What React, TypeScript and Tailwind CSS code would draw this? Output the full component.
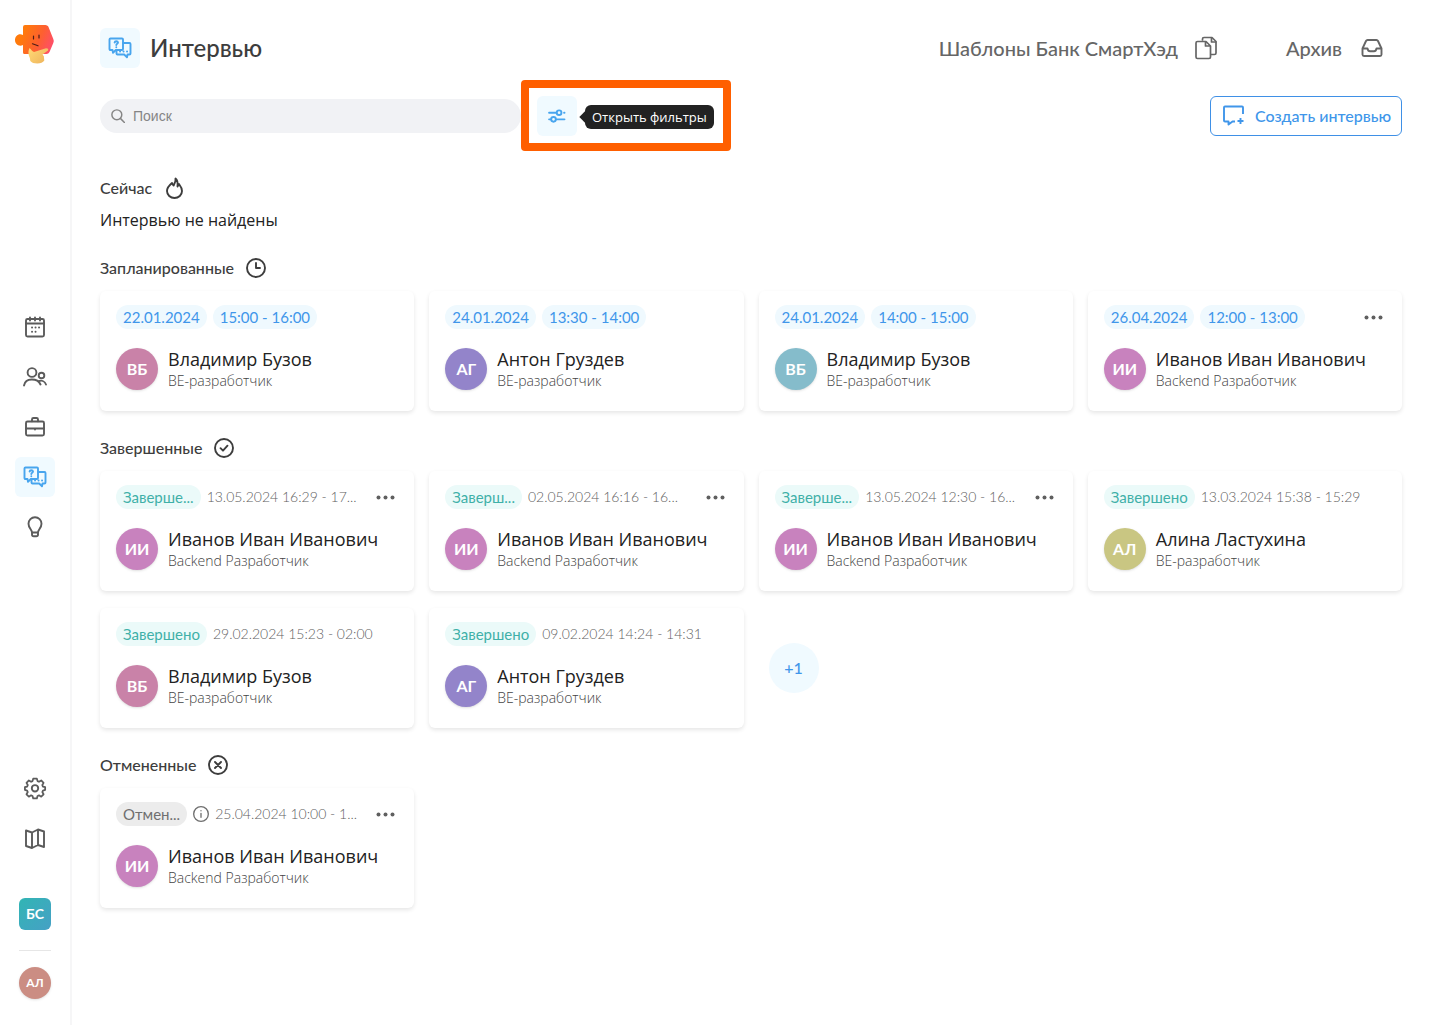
import React, { useState } from 'react';

type Kind = 'planned' | 'done' | 'canceled';

interface Interview {
  id: number;
  kind: Kind;
  label: string;
  time: string;
  name: string;
  role: string;
  initials: string;
  avatar: string;
  menu?: boolean;
}

const PINK = 'bg-[#c982a8]';
const VIOLET = 'bg-[#9384ca]';
const TEAL = 'bg-[#85bccb]';
const MAGENTA = 'bg-[#c882be]';
const OLIVE = 'bg-[#c9c682]';

const planned: Interview[] = [
  { id: 1, kind: 'planned', label: '22.01.2024', time: '15:00 - 16:00', name: 'Владимир Бузов', role: 'BE-разработчик', initials: 'ВБ', avatar: PINK },
  { id: 2, kind: 'planned', label: '24.01.2024', time: '13:30 - 14:00', name: 'Антон Груздев', role: 'BE-разработчик', initials: 'АГ', avatar: VIOLET },
  { id: 3, kind: 'planned', label: '24.01.2024', time: '14:00 - 15:00', name: 'Владимир Бузов', role: 'BE-разработчик', initials: 'ВБ', avatar: TEAL },
  { id: 4, kind: 'planned', label: '26.04.2024', time: '12:00 - 13:00', name: 'Иванов Иван Иванович', role: 'Backend Разработчик', initials: 'ИИ', avatar: MAGENTA, menu: true },
];

const done: Interview[] = [
  { id: 5, kind: 'done', label: 'Заверше...', time: '13.05.2024 16:29 - 17...', name: 'Иванов Иван Иванович', role: 'Backend Разработчик', initials: 'ИИ', avatar: MAGENTA, menu: true },
  { id: 6, kind: 'done', label: 'Заверш...', time: '02.05.2024 16:16 - 16...', name: 'Иванов Иван Иванович', role: 'Backend Разработчик', initials: 'ИИ', avatar: MAGENTA, menu: true },
  { id: 7, kind: 'done', label: 'Заверше...', time: '13.05.2024 12:30 - 16...', name: 'Иванов Иван Иванович', role: 'Backend Разработчик', initials: 'ИИ', avatar: MAGENTA, menu: true },
  { id: 8, kind: 'done', label: 'Завершено', time: '13.03.2024 15:38 - 15:29', name: 'Алина Ластухина', role: 'BE-разработчик', initials: 'АЛ', avatar: OLIVE },
  { id: 9, kind: 'done', label: 'Завершено', time: '29.02.2024 15:23 - 02:00', name: 'Владимир Бузов', role: 'BE-разработчик', initials: 'ВБ', avatar: PINK },
  { id: 10, kind: 'done', label: 'Завершено', time: '09.02.2024 14:24 - 14:31', name: 'Антон Груздев', role: 'BE-разработчик', initials: 'АГ', avatar: VIOLET },
];

const canceled: Interview[] = [
  { id: 11, kind: 'canceled', label: 'Отмен...', time: '25.04.2024 10:00 - 1...', name: 'Иванов Иван Иванович', role: 'Backend Разработчик', initials: 'ИИ', avatar: MAGENTA, menu: true },
];

const pillStyles: Record<Kind, string> = {
  planned: 'bg-[#eff9fe] text-[#4096ea]',
  done: 'bg-[#ebfaf9] text-[#3fb0a8]',
  canceled: 'bg-[#ececec] text-[#6f6f6f]',
};

const Icon: React.FC<{ children: React.ReactNode; className?: string; width?: number }> = ({ children, className = 'size-6', width = 1.9 }) => (
  <svg viewBox="0 0 24 24" fill="none" stroke="currentColor" strokeWidth={width} strokeLinecap="round" strokeLinejoin="round" className={`shrink-0 ${className}`} aria-hidden="true">
    {children}
  </svg>
);

const Logo = () => (
  <svg viewBox="0 0 40 40" className="size-10" aria-hidden="true">
    <defs>
      <linearGradient id="logo-body" x1="4" y1="8" x2="40" y2="24" gradientUnits="userSpaceOnUse">
        <stop offset="0.1" stopColor="#ff7a0c" />
        <stop offset="0.55" stopColor="#fd6030" />
        <stop offset="1" stopColor="#ff4a76" />
      </linearGradient>
      <linearGradient id="logo-hand" x1="14" y1="26" x2="30" y2="40" gradientUnits="userSpaceOnUse">
        <stop stopColor="#ffd773" />
        <stop offset="1" stopColor="#eeb45d" />
      </linearGradient>
    </defs>
    <path fill="url(#logo-body)" d="M10 1h20.500q1.800 0 2.800 1.500l5 12.500q1 2 0 4l-3.800 9q-1 2-3 2H9.500q-1.500 0-1.500-1.500V21c-4 2-8-.8-8-5s4-7.500 8-5V3q0-2 2-2z" />
    <path fill="url(#logo-hand)" d="M14.500 24c1.500 1 2.500 3.500 4.500 4l12-3.800q3 0 2 2.200l-5.500 4q2 1.600 1.500 3.600l.3 2.500q-2 3-7 3t-7-2.500q0-3-1.300-5c-.8-2.500-.8-5.500.5-8z" />
    <path fill="none" stroke="#4e1d18" strokeWidth="1.200" strokeLinecap="round" d="M17.500 19.800l5.500 2M18.500 12v3M24 11v3" />
  </svg>
);

const InterviewIcon = ({ className }: { className?: string }) => (
  <Icon className={className}>
    <path d="M2.500 2.500h11.500q1 0 1 1v9.500q0 1-1 1H7.800L5 16.800 4.500 14h-2q-1 0-1-1V3.500q0-1 1-1z" />
    <path d="M15.200 7h6.300q1 0 1 1v9.500q0 1-1 1h-2l-.5 2.800-2.800-2.800H9.500q-1 0-1-1V14" />
    <path d="M6.600 6.500q.2-1.300 1.700-1.300t1.700 1.300c0 1.200-1.700 1.200-1.700 2.600M8.300 11.200v.1" />
    <path d="M12 15.500h.1M15.500 15.500h.1M19 15.500h.1" />
  </Icon>
);

const navItems = [
  {
    title: 'Календарь',
    icon: (
      <Icon>
        <rect x="3" y="4" width="18" height="17.500" rx="1.500" />
        <path d="M3 8.500h18M7 2.500v3M12 2.500v3M17 2.500v3" />
        <path d="M12.500 12.500h.1M16 12.500h.1M9 12.500h.1M9 16.800h.1M12.500 16.800h.1" />
      </Icon>
    ),
  },
  {
    title: 'Кандидаты',
    icon: (
      <Icon>
        <circle cx="9" cy="7.500" r="4.400" />
        <path d="M1 20.500c1.500-8 13.500-7.500 16.500-1" />
        <circle cx="18.500" cy="10.500" r="2.800" />
        <path d="M15.800 16.200c3-1.200 6 .3 7.200 3.300" />
      </Icon>
    ),
  },
  {
    title: 'Вакансии',
    icon: (
      <Icon>
        <rect x="3" y="6.500" width="18" height="14" rx="1.500" />
        <path d="M9 6.200V4.500q0-1.500 1.500-1.500h3q1.500 0 1.500 1.500v1.700M3 13.500h18M12 13.500v1" />
      </Icon>
    ),
  },
  { title: 'Интервью', icon: <InterviewIcon />, active: true },
  {
    title: 'Подсказки',
    icon: (
      <Icon>
        <path d="M9 17.500c0-3-3.500-4.500-3.500-8.800a6.500 6.500 0 0 1 13 0c0 4.300-3.500 5.800-3.500 8.800zM9 17.500v2q0 1.800 1.800 1.800h2.400q1.800 0 1.800-1.800v-2" />
      </Icon>
    ),
  },
];

const Sidebar = () => (
  <aside className="flex w-[72px] shrink-0 flex-col items-center border-r-2 border-[#f6f6f7] pt-6 pb-[26px] text-[#5b5b5b]">
    <a href="#" aria-label="Главная" className="mb-[22px]">
      <Logo />
    </a>
    <nav className="flex flex-1 flex-col items-center justify-center gap-[10px]">
      {navItems.map(item => (
        <a key={item.title} href="#" aria-label={item.title} className={`flex size-10 items-center justify-center rounded-md ${item.active ? 'bg-[#f0faff] text-[#48a5ee]' : ''}`}>
          {item.icon}
        </a>
      ))}
    </nav>
    <div className="flex flex-col items-center gap-[10px]">
      <a href="#" aria-label="Настройки" className="flex size-10 items-center justify-center">
        <Icon>
          <path d="M10 2.200h4l.7 2.700 1.600.7 2.400-1.400 2.600 2.600-1.400 2.400.7 1.600 2.400.7v3l-2.400.7-.7 1.600 1.400 2.400-2.600 2.600-2.400-1.400-1.600.7-.7 2.700h-4l-.7-2.700-1.600-.7-2.400 1.400-2.600-2.600 1.400-2.400-.7-1.600-2.400-.7v-3l2.400-.7.7-1.600-1.400-2.400 2.600-2.600 2.400 1.400 1.600-.7z" transform="translate(1 .6) scale(.92)" />
          <circle cx="12" cy="12.300" r="3.200" />
        </Icon>
      </a>
      <a href="#" aria-label="База знаний" className="flex size-10 items-center justify-center">
        <Icon>
          <path d="M3 4.500l6 2 6-3 6 2v15.500l-6-2-6 3-6-2zM9 6.500V22M15 3.500V19" />
        </Icon>
      </a>
    </div>
    <button className="mt-10 flex size-8 items-center justify-center rounded-md bg-linear-to-br from-[#30b5b4] to-[#45a0c5] font-['Lato','Open_Sans',sans-serif] text-sm font-bold text-white">БС</button>
    <hr className="mt-5 mb-4 w-8 border-[#e6e6e6]" />
    <button className="flex size-8 items-center justify-center rounded-full bg-[#cb8d83] font-['Lato','Open_Sans',sans-serif] text-xs font-bold text-white shadow-sm">АЛ</button>
  </aside>
);

const SectionTitle: React.FC<{ title: string; children: React.ReactNode }> = ({ title, children }) => (
  <h2 className="flex h-6 items-center gap-[10px] font-['Lato','Open_Sans',sans-serif] text-base font-medium text-[#3d3d3d]">
    {title}
    {children}
  </h2>
);

const InterviewCard = ({ item }: { item: Interview }) => (
  <article className="h-[120px] min-w-0 rounded-md bg-white px-4 pt-[14px] shadow-[0_2px_4px_rgba(0,0,0,0.1)]">
    <div className="flex h-6 items-center gap-[6px] font-['Lato','Open_Sans',sans-serif] text-[15px] whitespace-nowrap">
      <span className={`rounded-full px-[7px] leading-6 ${pillStyles[item.kind]}`}>{item.label}</span>
      {item.kind === 'planned' ? (
        <span className={`rounded-full px-[7px] leading-6 ${pillStyles.planned}`}>{item.time}</span>
      ) : (
        <>
          {item.kind === 'canceled' && (
            <Icon className="size-4 text-[#6f6f6f]" width={2}>
              <circle cx="12" cy="12" r="11" />
              <path d="M12 11v6M12 7v.1" />
            </Icon>
          )}
          <span className="text-sm font-light text-[#5f5f5f]">{item.time}</span>
        </>
      )}
      {item.menu && (
        <button aria-label="Меню" className="ml-auto text-[#5f5f5f]">
          <svg viewBox="0 0 24 24" className="size-6" fill="currentColor" aria-hidden="true">
            <circle cx="4.500" cy="12.500" r="2" />
            <circle cx="11.500" cy="12.500" r="2" />
            <circle cx="18.500" cy="12.500" r="2" />
          </svg>
        </button>
      )}
    </div>
    <div className="mt-[18px] flex items-center gap-[10px]">
      <div className={`flex size-[42px] shrink-0 items-center justify-center rounded-full font-['Lato','Open_Sans',sans-serif] text-base font-bold text-white shadow-sm ${item.avatar}`}>{item.initials}</div>
      <div className="min-w-0">
        <p className="text-lg leading-6">{item.name}</p>
        <p className="text-sm leading-5 font-light text-[#444]">{item.role}</p>
      </div>
    </div>
  </article>
);

const cardGrid = 'mt-[11px] grid grid-cols-4 gap-x-[15px] gap-y-[17px]';

const App: React.FC = () => {
  const [query, setQuery] = useState('');

  return (
    <div className="flex min-h-screen bg-white font-['Open_Sans','Noto_Sans',sans-serif] text-[#222]">
      <Sidebar />
      <main className="min-w-0 flex-1 pt-7 pr-[38px] pl-7">
        <header className="flex h-10 items-center font-['Lato','Open_Sans',sans-serif]">
          <div className="flex size-10 items-center justify-center rounded-md bg-[#f0faff] text-[#48a5ee]">
            <InterviewIcon />
          </div>
          <h1 className="ml-[10px] text-2xl font-medium text-[#3d3d3d]">Интервью</h1>
          <a href="#" className="ml-auto flex items-center gap-4 text-xl font-medium text-[#666]">
            Шаблоны Банк СмартХэд
            <Icon width={1.700}>
              <path d="M8.500 4V3q0-1.500 1.500-1.500h8L22 5.500V17q0 1.500-1.500 1.500H17" />
              <path d="M3.500 5.500h8.500l4.500 4.500v11q0 1.500-1.500 1.500H3.500Q2 22.500 2 21V7q0-1.500 1.500-1.500zM11.500 5.500V10h5M17.500 1.800V6h4.200" />
            </Icon>
          </a>
          <a href="#" className="mr-[18px] ml-[68px] flex items-center gap-[18px] text-xl font-medium text-[#666]">
            Архив
            <Icon>
              <path d="M2.500 12.500L6 5q.5-1 1.500-1h9q1 0 1.500 1l3.500 7.500V18.500q0 1.500-1.500 1.500H4Q2.500 20 2.500 18.500zM2.500 12.500H7.500q.5 2.800 2.500 2.800h4q2 0 2.500-2.800h5" />
            </Icon>
          </a>
        </header>

        <div className="mt-7 flex items-center">
          <label className="flex h-[34px] w-full max-w-[421px] items-center gap-2 rounded-full bg-[#f1f2f5] px-[11px] text-[#858585]">
            <Icon className="size-[14px]" width={2.500}>
              <circle cx="10" cy="10" r="8.500" />
              <path d="M16.500 16.500L23 23" />
            </Icon>
            <input value={query} onChange={e => setQuery(e.target.value)} placeholder="Поиск" aria-label="Поиск" className="w-full bg-transparent font-['Liberation_Sans',sans-serif] text-sm outline-none placeholder:text-[#858585]" />
          </label>
          <div className="relative ml-4">
            <button aria-label="Открыть фильтры" className="flex size-10 items-center justify-center rounded-md bg-[#f0faff] text-[#48a5ee]">
              <Icon className="size-5" width={2.300}>
                <path d="M2.500 8h8.500M20.500 8h.5M2.500 16h2M11 16h10" />
                <circle cx="14.500" cy="8" r="2.800" />
                <circle cx="7.800" cy="16" r="2.800" />
              </Icon>
            </button>
            <div role="tooltip" className="absolute top-[9px] left-12 rounded-md bg-[#222] px-[7px] text-[13px] leading-6 whitespace-nowrap text-white">
              <span className="absolute top-2 -left-1 size-2 rotate-45 bg-[#222]" />
              Открыть фильтры
            </div>
            <div className="pointer-events-none absolute -top-4 -left-4 h-[71px] w-[210px] rounded-sm border-8 border-[#ff5f00]" />
          </div>
          <button className="ml-auto flex h-10 shrink-0 items-center gap-[10px] rounded-md border border-[#3f90e6] px-[10px] font-['Lato','Open_Sans',sans-serif] text-base font-medium text-[#4096ea]">
            <Icon>
              <path strokeLinecap="butt" d="M22 10V3.500q0-1-1-1H4q-1 0-1 1v13q0 1 1 1h3.500v3l4-3H14M19.500 14v6M16.500 17h6" />
            </Icon>
            Создать интервью
          </button>
        </div>

        <section className="mt-10">
          <SectionTitle title="Сейчас">
            <Icon>
              <path d="M13.500 2.500c.5 3-1 4.500-1.800 7-.9-.8-1.700-1.500-1.700-2.500-3 2.500-5 5-5 8a7.500 7 0 0 0 15 0c0-3-1.500-5-3-7l-1.500 2.500c.5-3.500.3-6-2-8z" />
            </Icon>
          </SectionTitle>
          <p className="mt-2 text-base leading-6">Интервью не найдены</p>
        </section>

        <section className="mt-6">
          <SectionTitle title="Запланированные">
            <Icon>
              <circle cx="12" cy="12" r="9" />
              <path d="M12 7v5h4" />
            </Icon>
          </SectionTitle>
          <div className={cardGrid}>
            {planned.map(item => <InterviewCard key={item.id} item={item} />)}
          </div>
        </section>

        <section className="mt-[25px]">
          <SectionTitle title="Завершенные">
            <Icon>
              <circle cx="12" cy="12" r="9" />
              <path d="M8.500 12.200l2.500 2.500 4.500-5" />
            </Icon>
          </SectionTitle>
          <div className={cardGrid}>
            {done.map(item => <InterviewCard key={item.id} item={item} />)}
            <button className="ml-[10px] flex size-[50px] items-center justify-center self-center rounded-full bg-[#f0faff] font-['Lato','Open_Sans',sans-serif] text-base font-medium text-[#4096ea]">+1</button>
          </div>
        </section>

        <section className="mt-[25px]">
          <SectionTitle title="Отмененные">
            <Icon>
              <circle cx="12" cy="12" r="9" />
              <path d="M9 9l6 6M15 9l-6 6" />
            </Icon>
          </SectionTitle>
          <div className={cardGrid}>
            {canceled.map(item => <InterviewCard key={item.id} item={item} />)}
          </div>
        </section>
      </main>
    </div>
  );
};

export default App;
